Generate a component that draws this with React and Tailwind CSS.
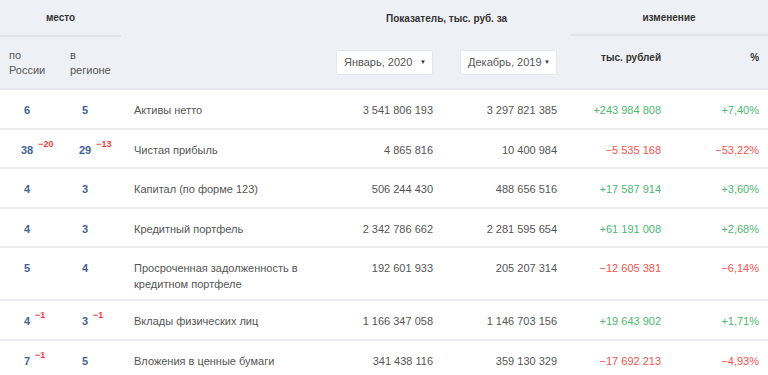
import React from "react";

const rows = [
  { r: "6", g: "5", rd: null, gd: null, name: "Активы нетто", a: "3 541 806 193", b: "3 297 821 385", c: "+243 984 808", p: "+7,40%", up: true },
  { r: "38", g: "29", rd: "−20", gd: "−13", name: "Чистая прибыль", a: "4 865 816", b: "10 400 984", c: "−5 535 168", p: "−53,22%", up: false },
  { r: "4", g: "3", rd: null, gd: null, name: "Капитал (по форме 123)", a: "506 244 430", b: "488 656 516", c: "+17 587 914", p: "+3,60%", up: true },
  { r: "4", g: "3", rd: null, gd: null, name: "Кредитный портфель", a: "2 342 786 662", b: "2 281 595 654", c: "+61 191 008", p: "+2,68%", up: true },
  { r: "5", g: "4", rd: null, gd: null, name: "Просроченная задолженность в кредитном портфеле", a: "192 601 933", b: "205 207 314", c: "−12 605 381", p: "−6,14%", up: false, tall: true },
  { r: "4", g: "3", rd: "−1", gd: "−1", name: "Вклады физических лиц", a: "1 166 347 058", b: "1 146 703 156", c: "+19 643 902", p: "+1,71%", up: true },
  { r: "7", g: "5", rd: "−1", gd: null, name: "Вложения в ценные бумаги", a: "341 438 116", b: "359 130 329", c: "−17 692 213", p: "−4,93%", up: false },
];

function Rank({ v, d }) {
  return (
    <div className="flex justify-center w-[54px]">
      <span className="relative font-bold text-[#3f6397]">
        {v}
        {d && (
          <span className="absolute left-full top-[-6px] ml-[5px] text-[9px] font-bold text-[#f23c3c] whitespace-nowrap">
            {d}
          </span>
        )}
      </span>
    </div>
  );
}

function Select({ label }) {
  return (
    <div className="ml-auto flex items-center justify-between w-[97px] h-[25px] bg-white rounded-[2px] border border-[#e6e7ec] pl-[7px] pr-[6px] text-[#555]">
      <span>{label}</span>
      <span className="text-[6px] text-[#333]">▼</span>
    </div>
  );
}

export default function App() {
  return (
    <div
      className="w-[768px] h-[375px] overflow-hidden bg-white text-[11px] text-[#555]"
      style={{ fontFamily: '"Liberation Sans", Arial, sans-serif' }}
    >
      <table className="w-[768px] table-fixed border-collapse">
        <colgroup>
          <col className="w-[61px]" />
          <col className="w-[60px]" />
          <col className="w-[189px]" />
          <col className="w-[131px]" />
          <col className="w-[124px]" />
          <col className="w-[104px]" />
          <col className="w-[99px]" />
        </colgroup>
        <thead className="bg-[#eff0f5]">
          <tr className="h-[36px]">
            <th colSpan={2} className="p-0 align-middle text-center font-bold text-[10px] text-[#333] border-b-2 border-[#e2e4ec]">
              место
            </th>
            <th className="p-0"></th>
            <th colSpan={2} className="p-0 align-middle text-center font-bold text-[10px] text-[#333] pl-[18px]">
              Показатель, тыс. руб. за
            </th>
            <th colSpan={2} className="p-0 align-middle text-center font-bold text-[10px] text-[#333]">
              <div className="ml-[5px] h-[36px] flex items-center justify-center border-b-2 border-[#e2e4ec]">изменение</div>
            </th>
          </tr>
          <tr className="h-[53px] border-b-2 border-[#e6e7ec]">
            <th className="p-0 pl-[9px] align-middle text-left font-normal leading-[15px] text-[#555]">
              по<br />России
            </th>
            <th className="p-0 pl-[9px] align-middle text-left font-normal leading-[15px] text-[#555]">
              в<br />регионе
            </th>
            <th className="p-0"></th>
            <th className="p-0 pr-[8px] align-middle font-normal">
              <Select label="Январь, 2020" />
            </th>
            <th className="p-0 pr-[8px] align-middle font-normal">
              <Select label="Декабрь, 2019" />
            </th>
            <th className="p-0 pr-[8px] align-top pt-[14px] text-right font-bold text-[10px] text-[#333]">
              тыс. рублей
            </th>
            <th className="p-0 pr-[9px] align-top pt-[14px] text-right font-bold text-[10px] text-[#333]">
              %
            </th>
          </tr>
        </thead>
        <tbody>
          {rows.map((row, i) => {
            const h = row.tall ? "h-[53px]" : "h-[39.5px]";
            const col = row.up ? "text-[#4cb86e]" : "text-[#f2544f]";
            return (
              <tr key={i} className="border-b-2 border-[#ebecef] leading-[16px]">
                <td className={`p-0 pt-[12px] align-top ${h}`}>
                  <Rank v={row.r} d={row.rd} />
                </td>
                <td className="p-0 pt-[12px] align-top">
                  <div className="-ml-[3px]">
                    <Rank v={row.g} d={row.gd} />
                  </div>
                </td>
                <td className="p-0 pt-[12px] pl-[13px] pr-[8px] align-top">{row.name}</td>
                <td className="p-0 pt-[12px] pr-[8px] align-top text-right">{row.a}</td>
                <td className="p-0 pt-[12px] pr-[8px] align-top text-right">{row.b}</td>
                <td className={`p-0 pt-[12px] pr-[8px] align-top text-right ${col}`}>{row.c}</td>
                <td className={`p-0 pt-[12px] pr-[9px] align-top text-right ${col}`}>{row.p}</td>
              </tr>
            );
          })}
        </tbody>
      </table>
    </div>
  );
}
